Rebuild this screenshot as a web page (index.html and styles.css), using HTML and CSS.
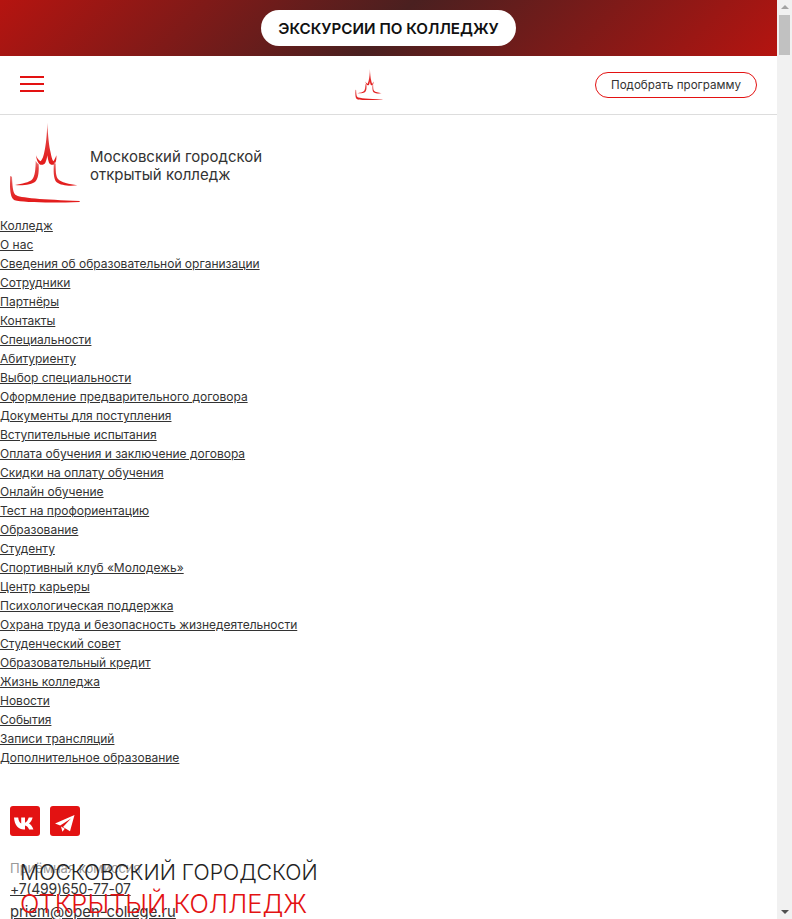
FILE: index.html
```html
<!DOCTYPE html>
<html lang="ru">
<head>
    <meta charset="UTF-8">
    <meta name="viewport" content="width=device-width, initial-scale=1.0">
    <title>Московский городской открытый колледж</title>
    <link rel="stylesheet" href="styles.css">
</head>
<body>

<div class="window">
    <div class="page">
        <div class="banner">
            <a class="banner-btn" href="#">ЭКСКУРСИИ ПО КОЛЛЕДЖУ</a>
        </div>

        <header class="header">
            <div class="burger"><span></span><span></span><span></span></div>
            <svg class="logo-small" viewBox="30 9 210 246">
                <use href="#logo-shape"></use>
            </svg>
            <a class="pick-btn" href="#">Подобрать программу</a>
        </header>

        <div class="brand">
            <svg class="logo" viewBox="30 9 210 246">
                <defs>
                    <linearGradient id="fade" x1="0" y1="0" x2="0" y2="1">
                        <stop offset="0" stop-color="#ea8080"/>
                        <stop offset="0.3" stop-color="#e34040"/>
                        <stop offset="1" stop-color="#e31a1a"/>
                    </linearGradient>
                </defs>
                <g id="logo-shape" fill="url(#fade)">
                    <path d="M142 8C144 50 147 78 152 98C154 110 157 120 160 124C163 120 166 114 169 106C170 118 168 127 164 131C158 137 151 135 147 128C145 122 143 114 142 106C141 114 139 122 136 128C132 135 123 137 117 131C112 126 109 116 108 106C111 114 115 120 122 124C127 118 131 108 133 96C138 74 141 44 142 8Z"/>
                    <path d="M107 122C110 127 113 131 116 133C117 150 116 174 107 184C97 194 66 198 45 195C66 191 88 188 97 178C105 169 107 146 107 122Z"/>
                    <path d="M162 126L167 131C167 150 167 168 174 177C183 188 208 192 232 196C210 199 182 197 170 187C160 178 160 152 162 126Z"/>
                    <path d="M30 168L36 170C37 194 38 216 46 224C58 234 130 238 239 243L239 246C160 249 66 248 44 241C30 235 29 205 30 168Z"/>
                </g>
            </svg>
            <div class="brand-name">Московский городской<br>открытый колледж</div>
        </div>

        <ul class="nav">
            <li><a href="#">Колледж</a></li>
            <li><a href="#">О нас</a></li>
            <li><a href="#">Сведения об образовательной организации</a></li>
            <li><a href="#">Сотрудники</a></li>
            <li><a href="#">Партнёры</a></li>
            <li><a href="#">Контакты</a></li>
            <li><a href="#">Специальности</a></li>
            <li><a href="#">Абитуриенту</a></li>
            <li><a href="#">Выбор специальности</a></li>
            <li><a href="#">Оформление предварительного договора</a></li>
            <li><a href="#">Документы для поступления</a></li>
            <li><a href="#">Вступительные испытания</a></li>
            <li><a href="#">Оплата обучения и заключение договора</a></li>
            <li><a href="#">Скидки на оплату обучения</a></li>
            <li><a href="#">Онлайн обучение</a></li>
            <li><a href="#">Тест на профориентацию</a></li>
            <li><a href="#">Образование</a></li>
            <li><a href="#">Студенту</a></li>
            <li><a href="#">Спортивный клуб «Молодежь»</a></li>
            <li><a href="#">Центр карьеры</a></li>
            <li><a href="#">Психологическая поддержка</a></li>
            <li><a href="#">Охрана труда и безопасность жизнедеятельности</a></li>
            <li><a href="#">Студенческий совет</a></li>
            <li><a href="#">Образовательный кредит</a></li>
            <li><a href="#">Жизнь колледжа</a></li>
            <li><a href="#">Новости</a></li>
            <li><a href="#">События</a></li>
            <li><a href="#">Записи трансляций</a></li>
            <li><a href="#">Дополнительное образование</a></li>
        </ul>

        <div class="social">
            <a class="social-btn" href="#">
                <svg viewBox="0 0 30 30"><path d="M4 11.5h4.2c.3 3 1.6 5.6 3 6V11.5H15v5.2c1.5-.3 3-2.8 3.7-5.2h3.9c-.6 2.8-2.3 5-3.6 6 1.4.8 3.4 2.8 4.4 6h-4.3c-.8-2.3-2.3-3.9-4.1-4.1v4.1h-1C8.5 23.5 4.5 19.5 4 11.5z"/></svg>
            </a>
            <a class="social-btn" href="#">
                <svg viewBox="0 0 30 30"><path d="M24.5 9L5 17.5l5.2 2L21 12.5 13 21l7 4.2zM11 20.5l1.4 5.2 2.4-3z"/></svg>
            </a>
        </div>

        <div class="contacts">
            <div class="contacts-label">Приёмная комиссия</div>
            <a class="contacts-link contacts-phone" href="#">+7(499)650-77-07</a>
            <a class="contacts-link" href="#">priem@open-college.ru</a>
            <div class="college-title">МОСКОВСКИЙ ГОРОДСКОЙ<br><span>ОТКРЫТЫЙ КОЛЛЕДЖ</span></div>
        </div>
    </div>

    <div class="scrollbar">
        <div class="arrow-up"></div>
        <div class="thumb"></div>
        <div class="arrow-down"></div>
    </div>
</div>

</body>
</html>
```

FILE: styles.css
```css
* {
    box-sizing: border-box;
}
html, body {
    height: 100%;
}
body {
    margin: 0;
    overflow: hidden;
    font-family: Inter, "Noto Sans", Arial, sans-serif;
    color: #333;
    background-color: #fff;
}
a {
    color: inherit;
}
.window {
    display: flex;
    height: 919px;
}
.page {
    flex: 1;
    min-width: 0;
    overflow: hidden;
}

/* banner */
.banner {
    height: 56px;
    display: flex;
    justify-content: center;
    padding-top: 10px;
    background: linear-gradient(135deg, #b51410 0%, #4a2020 50%, #b51410 100%);
}
.banner-btn {
    width: 255px;
    height: 36px;
    display: flex;
    align-items: center;
    justify-content: center;
    background-color: #fff;
    border-radius: 18px;
    color: #111;
    font-size: 15.2px;
    font-weight: 600;
    text-decoration: none;
}

/* header */
.header {
    height: 59px;
    display: flex;
    align-items: center;
    justify-content: space-between;
    padding: 0 20px;
    border-bottom: 1px solid #ddd;
}
.burger {
    width: 24px;
    display: flex;
    flex-direction: column;
    gap: 5px;
    margin-bottom: 3px;
}
.burger span {
    height: 2px;
    background-color: #e31212;
}
.logo-small {
    width: 28px;
    height: 32px;
    margin-left: 98px;
}
.pick-btn {
    width: 162px;
    height: 26px;
    display: flex;
    align-items: center;
    justify-content: center;
    border: 1px solid #e31212;
    border-radius: 13px;
    font-size: 11.6px;
    text-decoration: none;
}

/* brand */
.brand {
    display: flex;
    align-items: center;
    gap: 10px;
    padding: 8px 10px 0;
}
.logo {
    width: 70px;
    height: 82px;
}
.brand-name {
    margin-top: 4px;
    font-size: 15px;
    line-height: 18px;
}

/* menu */
.nav {
    list-style: none;
    margin: 11px 0 0;
    padding: 0;
    font-size: 12px;
    line-height: 19px;
}

/* social */
.social {
    display: flex;
    gap: 10px;
    margin: 39px 0 0 10px;
}
.social-btn {
    width: 30px;
    height: 30px;
    background-color: #e31212;
    border-radius: 3px;
}
.social-btn svg {
    display: block;
    width: 30px;
    height: 30px;
    fill: #fff;
}

/* contacts */
.contacts {
    position: relative;
    margin: 24px 0 0 10px;
}
.contacts-label {
    font-size: 13px;
    line-height: 16px;
    color: #999;
}
.contacts-link {
    display: block;
    width: fit-content;
    margin-top: 3px;
    font-size: 14.8px;
    line-height: 20px;
}
.contacts-phone {
    font-size: 14px;
    letter-spacing: -0.25px;
}
.college-title {
    position: absolute;
    left: 10px;
    top: -4px;
    font-size: 21.3px;
    line-height: 32px;
    font-weight: 300;
    color: #222;
}
.college-title span {
    font-size: 25.5px;
    color: #e31212;
}

/* scrollbar */
.scrollbar {
    width: 15px;
    height: 919px;
    display: flex;
    flex-direction: column;
    align-items: center;
    background-color: #f1f1f1;
}
.arrow-up {
    margin-top: 5px;
    border: 4px solid transparent;
    border-top: 0;
    border-bottom: 4px solid #a3a3a3;
}
.thumb {
    width: 11px;
    height: 40px;
    margin-top: 6px;
    background-color: #c1c1c1;
}
.arrow-down {
    margin-top: auto;
    margin-bottom: 5px;
    border: 4px solid transparent;
    border-bottom: 0;
    border-top: 4px solid #505050;
}
```
